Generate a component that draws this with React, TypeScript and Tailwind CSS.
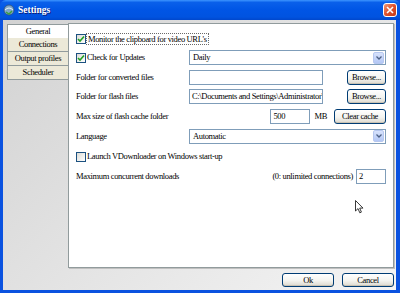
import React from "react";

function XPButton({ children, w, h = 15 }: { children: React.ReactNode; w: number; h?: number }) {
  return (
    <div
      className="flex shrink-0 items-center justify-center rounded-[3px] border border-[#003c74] bg-[linear-gradient(to_bottom,#ffffff,#f4f4f0_55%,#dcd8ce)] text-black shadow-[inset_0_-1px_0_#c8c2b4]"
      style={{ width: w, height: h }}
    >
      {children}
    </div>
  );
}

function Check({ checked }: { checked: boolean }) {
  return (
    <span className="flex h-[10px] w-[10px] shrink-0 items-center justify-center border border-[#1c5180] bg-[linear-gradient(135deg,#dcdcd7,#ffffff)]">
      {checked && (
        <svg width="8" height="8" viewBox="0 0 8 8">
          <path d="M1 4 L3 6 L7 1.5" stroke="#21a121" strokeWidth="1.6" fill="none" />
        </svg>
      )}
    </span>
  );
}

function Select({ value }: { value: string }) {
  return (
    <div className="ml-[113px] flex h-[15px] flex-1 items-center border border-[#7f9db9] bg-white">
      <span className="flex-1 pl-[3px]">{value}</span>
      <span className="mr-[1px] flex h-[12px] w-[11px] items-center justify-center rounded-[2px] border border-[#b6c7ef] bg-[linear-gradient(to_bottom,#d7e2fc,#b3c7f5)]">
        <svg width="6" height="4" viewBox="0 0 6 4">
          <path d="M0.5 0.5 L3 3 L5.5 0.5" stroke="#4d6185" strokeWidth="1.3" fill="none" />
        </svg>
      </span>
    </div>
  );
}

function Input({ w, children }: { w: number; children?: React.ReactNode }) {
  return (
    <div
      className="flex h-[15px] shrink-0 items-center overflow-hidden whitespace-nowrap border border-[#7f9db9] bg-white pl-[2px]"
      style={{ width: w }}
    >
      {children}
    </div>
  );
}

export default function App() {
  const tabs = ["General", "Connections", "Output profiles", "Scheduler"];
  return (
    <div className="flex h-[293px] w-[400px] flex-col overflow-hidden bg-[#0a52e0] font-['Liberation_Serif',serif] text-[8.5px] tracking-[-0.35px] text-black">
      {/* title bar */}
      <div className="relative flex h-[20px] shrink-0 items-center rounded-t-[6px] bg-[linear-gradient(to_bottom,#3d95ff_0%,#0a60ea_12%,#0055e5_50%,#0053e0_85%,#0047cc_100%)] pl-[3px] pr-[3px]">
        <svg width="12" height="12" viewBox="0 0 12 12" className="mr-[3px]">
          <circle cx="6" cy="6" r="5" fill="#7fa7c9" stroke="#2d4f7a" strokeWidth="0.8" />
          <path d="M2 6 Q6 2 10 6" stroke="#e8f0f8" strokeWidth="1" fill="none" />
          <path d="M3 8 L6 10 L9 7" stroke="#3aa03a" strokeWidth="1.4" fill="none" />
        </svg>
        <span className="text-[9.5px] font-bold tracking-[0px] text-white [text-shadow:1px_1px_0_#0a1e7a]">Settings</span>
        <div className="ml-auto flex h-[14px] w-[14px] items-center justify-center rounded-[3px] border border-white bg-[linear-gradient(135deg,#f09a78,#e0502c_50%,#c23a16)]">
          <svg width="8" height="8" viewBox="0 0 8 8">
            <path d="M1 1 L7 7 M7 1 L1 7" stroke="white" strokeWidth="1.6" />
          </svg>
        </div>
      </div>
      {/* client */}
      <div className="mb-[3px] ml-[3px] mr-[4px] flex flex-1 flex-col bg-[linear-gradient(135deg,#d2d2d2,#e4e4e4_50%,#f4f4f4)] pt-[3px]">
        <div className="flex pl-[4px] pr-[2px]">
          <div className="mt-[1px] flex w-[61px] shrink-0 flex-col">
            {tabs.map((t, i) => (
              <div
                key={t}
                className={
                  i === 0
                    ? "flex h-[14px] items-center justify-center border-l border-t border-[#919b9c] bg-white"
                    : "flex h-[14px] items-center justify-center border-b border-l border-[#919b9c] bg-[#ece9d8]"
                }
              >
                {t}
              </div>
            ))}
          </div>
          <div className="relative flex h-[245px] flex-1 flex-col border border-[#919b9c] bg-white pl-[7px] pr-[7px] pt-[5px] shadow-[1px_1px_0_#c0c0c0]">
            {/* row 1 */}
            <div className="flex h-[19px] items-center">
              <Check checked />
              <span className="ml-[0px] border border-dotted border-[#6a6a6a] px-[1px] leading-[10px]">
                Monitor the clipboard for video URL's
              </span>
            </div>
            {/* row 2 */}
            <div className="flex h-[19px] items-center">
              <Check checked />
              <span className="ml-[1px] w-[102px]">Check for Updates</span>
              <div className="ml-0 flex flex-1">
                <div className="flex h-[15px] flex-1 items-center border border-[#7f9db9] bg-white">
                  <span className="flex-1 pl-[3px]">Daily</span>
                  <span className="mr-[1px] flex h-[12px] w-[11px] items-center justify-center rounded-[2px] border border-[#b6c7ef] bg-[linear-gradient(to_bottom,#d7e2fc,#b3c7f5)]">
                    <svg width="6" height="4" viewBox="0 0 6 4">
                      <path d="M0.5 0.5 L3 3 L5.5 0.5" stroke="#4d6185" strokeWidth="1.3" fill="none" />
                    </svg>
                  </span>
                </div>
              </div>
            </div>
            {/* row 3 */}
            <div className="flex h-[20px] items-center">
              <span className="w-[113px] shrink-0">Folder for converted files</span>
              <Input w={134} />
              <div className="ml-auto">
                <XPButton w={39}>Browse...</XPButton>
              </div>
            </div>
            {/* row 4 */}
            <div className="flex h-[19px] items-center">
              <span className="w-[113px] shrink-0">Folder for flash files</span>
              <Input w={134}>C:\Documents and Settings\Administrator\</Input>
              <div className="ml-auto">
                <XPButton w={39}>Browse...</XPButton>
              </div>
            </div>
            {/* row 5 */}
            <div className="flex h-[20px] items-center">
              <span>Max size of flash cache folder</span>
              <div className="ml-auto flex items-center">
                <Input w={40}>500</Input>
                <span className="ml-[4px] mr-[7px]">MB</span>
                <XPButton w={52}>Clear cache</XPButton>
              </div>
            </div>
            {/* row 6 */}
            <div className="flex h-[20px] items-center">
              <span className="w-[113px] shrink-0">Language</span>
              <div className="flex h-[15px] flex-1 items-center border border-[#7f9db9] bg-white">
                <span className="flex-1 pl-[3px]">Automatic</span>
                <span className="mr-[1px] flex h-[12px] w-[11px] items-center justify-center rounded-[2px] border border-[#b6c7ef] bg-[linear-gradient(to_bottom,#d7e2fc,#b3c7f5)]">
                  <svg width="6" height="4" viewBox="0 0 6 4">
                    <path d="M0.5 0.5 L3 3 L5.5 0.5" stroke="#4d6185" strokeWidth="1.3" fill="none" />
                  </svg>
                </span>
              </div>
            </div>
            {/* row 7 */}
            <div className="flex h-[21px] items-center">
              <Check checked={false} />
              <span className="ml-[1px]">Launch VDownloader on Windows start-up</span>
            </div>
            {/* row 8 */}
            <div className="flex h-[19px] items-center">
              <span>Maximum concurrent downloads</span>
              <div className="ml-auto flex items-center">
                <span className="mr-[3px]">(0: unlimited connections)</span>
                <Input w={30}>2</Input>
              </div>
            </div>
            {/* mouse cursor overlay */}
            <svg
              width="9"
              height="14"
              viewBox="0 0 9 14"
              className="absolute left-[286px] top-[176px]"
            >
              <path d="M0.5 0.5 L0.5 11 L3 8.6 L4.8 12.8 L6.4 12.1 L4.7 8.1 L8 8.1 Z" fill="white" stroke="#222" strokeWidth="0.9" strokeLinejoin="round" />
            </svg>
          </div>
        </div>
        <div className="mt-[5px] flex justify-end gap-[8px] pr-[2px]">
          <XPButton w={52} h={14}>Ok</XPButton>
          <XPButton w={52} h={14}>Cancel</XPButton>
        </div>
      </div>
    </div>
  );
}
